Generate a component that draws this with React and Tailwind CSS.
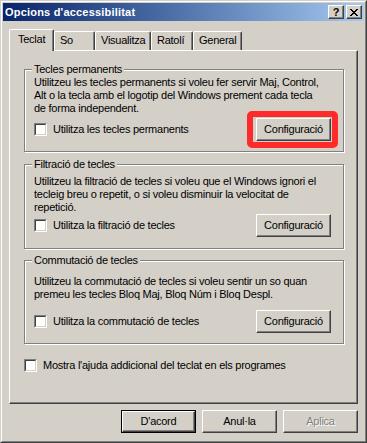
import React from 'react';

const Bevel = ({ className = '', children }) => (
  <div className={`border border-t-white border-l-white border-r-[#404040] border-b-[#404040] shadow-[inset_-1px_-1px_0_#808080] bg-[#d4d0c8] flex items-center justify-center ${className}`}>
    {children}
  </div>
);

const Button = ({ children, isDefault = false, disabled = false }) => {
  const label = disabled ? (
    <span className="text-[#808080] [text-shadow:1px_1px_0_#fff]">{children}</span>
  ) : (
    <span>{children}</span>
  );
  if (isDefault) {
    return (
      <div className="w-[75px] h-[23px] border border-black">
        <Bevel className="w-full h-full">{label}</Bevel>
      </div>
    );
  }
  return <Bevel className="w-[75px] h-[23px]">{label}</Bevel>;
};

const Checkbox = () => (
  <div className="w-[13px] h-[13px] shrink-0 border border-t-[#808080] border-l-[#808080] border-r-white border-b-white">
    <div className="w-full h-full bg-white border border-t-[#404040] border-l-[#404040] border-r-[#d4d0c8] border-b-[#d4d0c8]" />
  </div>
);

const GroupBox = ({ title, lines, check, highlight = false, className = '' }) => (
  <div className={`relative w-[320px] border border-[#808080] shadow-[inset_1px_1px_0_#fff,1px_1px_0_#fff] pl-[9px] pr-[12px] pb-[10px] ${className}`}>
    <div className="absolute left-[7px] -top-[7px] px-[2px] bg-[#d4d0c8] whitespace-nowrap">{title}</div>
    <div>
      {lines.map((l, i) => (
        <div key={i} className="whitespace-nowrap">{l}</div>
      ))}
    </div>
    <div className="row flex items-center justify-between h-[23px]">
      <div className="flex items-center gap-[6px]">
        <Checkbox />
        <span className="whitespace-nowrap">{check}</span>
      </div>
      <div className="relative">
        <Button>Configuració</Button>
        {highlight && (
          <div className="absolute -left-[9px] -right-[7px] -top-[7px] -bottom-[7px] border-[6px] border-[#ff2a2a] rounded-[5px] pointer-events-none" />
        )}
      </div>
    </div>
  </div>
);

const tabs = [
  { name: 'So', w: 'w-[41px]' },
  { name: 'Visualitza', w: 'w-[56px]' },
  { name: 'Ratolí', w: 'w-[42px]' },
  { name: 'General', w: 'w-[49px]' },
];

export default function App() {
  return (
    <div className="w-[367px] h-[443px] bg-[#d4d0c8] border border-t-[#d4d0c8] border-l-[#d4d0c8] border-r-[#404040] border-b-[#404040] font-['Liberation_Sans',Arial,sans-serif] text-[11px] leading-[13px] tracking-[-0.25px] text-black overflow-hidden">
      <div className="h-full border border-t-white border-l-white border-r-[#808080] border-b-[#808080] p-px flex flex-col">
        {/* title bar */}
        <div className="h-[18px] shrink-0 flex items-center justify-between pl-[2px] pr-[2px] bg-gradient-to-r from-[#0a246a] to-[#a6caf0]">
          <span className="text-white font-bold text-[11px] tracking-[0.2px]">Opcions d'accessibilitat</span>
          <div className="flex gap-[2px]">
            <Bevel className="w-[16px] h-[14px]">
              <span className="font-bold text-[11px] leading-none pt-px">?</span>
            </Bevel>
            <Bevel className="w-[16px] h-[14px]">
              <svg width="8" height="7" viewBox="0 0 8 7" shapeRendering="crispEdges">
                <path d="M0 0h2v1h-2zM6 0h2v1h-2zM1 1h2v1h-2zM5 1h2v1h-2zM2 2h4v1h-4zM3 3h2v1h-2zM2 4h4v1h-4zM1 5h2v1h-2zM5 5h2v1h-2zM0 6h2v1h-2zM6 6h2v1h-2z" fill="#000" />
              </svg>
            </Bevel>
          </div>
        </div>

        <div className="flex-1 flex flex-col px-[6px]">
          {/* tabs */}
          <div className="mt-[8px] h-[21px] flex items-end">
            <div className="relative z-10 w-[45px] h-[22px] -mb-px bg-[#d4d0c8] border-l border-t border-r border-l-white border-t-white border-r-[#404040] shadow-[inset_-1px_0_0_#808080] rounded-tl-[2px] rounded-tr-[2px] pl-[8px] pt-[3px]">
              Teclat
            </div>
            {tabs.map((t) => (
              <div
                key={t.name}
                className={`${t.w} h-[19px] bg-[#d4d0c8] border-l border-t border-r border-l-white border-t-white border-r-[#404040] shadow-[inset_-1px_0_0_#808080] rounded-tl-[2px] rounded-tr-[2px] pl-[5px] pt-[2px]`}
              >
                {t.name}
              </div>
            ))}
          </div>

          {/* panel */}
          <div className="h-[354px] flex flex-col border border-l-white border-t-white border-r-[#404040] border-b-[#404040] shadow-[inset_-1px_-1px_0_#808080] pt-[18px] pl-[14px]">
            <GroupBox
              className="pt-[6px] [&>.row]:mt-[3px]"
              title="Tecles permanents"
              lines={[
                'Utilitzeu les tecles permanents si voleu fer servir Maj, Control,',
                'Alt o la tecla amb el logotip del Windows prement cada tecla',
                'de forma independent.',
              ]}
              check="Utilitza les tecles permanents"
              highlight
            />
            <GroupBox
              className="mt-[12px] pt-[10px] !pb-[11px]"
              title="Filtració de tecles"
              lines={[
                'Utilitzeu la filtració de tecles si voleu que el Windows ignori el',
                'tecleig breu o repetit, o si voleu disminuir la velocitat de',
                'repetició.',
              ]}
              check="Utilitza la filtració de tecles"
            />
            <GroupBox
              className="mt-[11px] pt-[14px] [&>.row]:mt-[9px]"
              title="Commutació de tecles"
              lines={[
                'Utilitzeu la commutació de tecles si voleu sentir un so quan',
                'premeu les tecles Bloq Maj, Bloq Núm i Bloq Despl.',
              ]}
              check="Utilitza la commutació de tecles"
            />
            <div className="mt-[15px] flex items-center gap-[6px]">
              <Checkbox />
              <span className="whitespace-nowrap">Mostra l'ajuda addicional del teclat en els programes</span>
            </div>
          </div>

          {/* buttons */}
          <div className="mt-[6px] flex justify-end gap-[6px]">
            <Button isDefault>D'acord</Button>
            <Button>Anul·la</Button>
            <Button disabled>Aplica</Button>
          </div>
        </div>
      </div>
    </div>
  );
}
